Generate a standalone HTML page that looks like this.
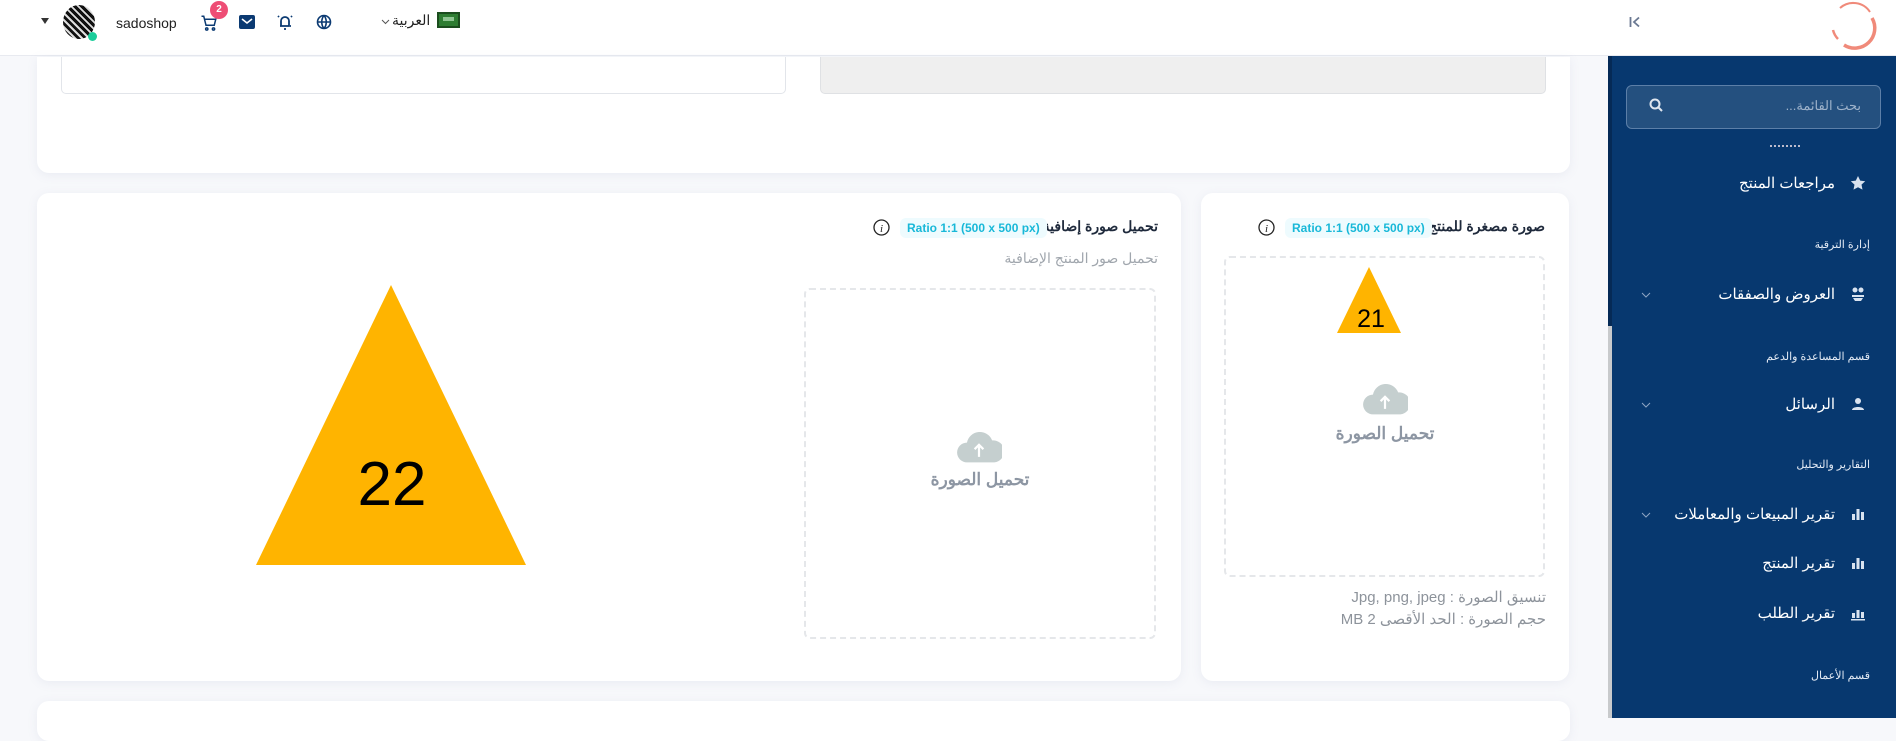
<!DOCTYPE html>
<html><head><meta charset="utf-8">
<style>
*{box-sizing:border-box;margin:0;padding:0}
body{width:1896px;height:718px;overflow:hidden;background:#f7f8fb;font-family:"Liberation Sans","Noto Sans CJK SC",sans-serif;position:relative;color:#334}
.a{position:absolute}
.card{position:absolute;background:#fff;border-radius:12px;box-shadow:0 2px 10px rgba(140,150,180,.12)}
.hdr{position:absolute;left:0;top:0;width:1896px;height:56px;background:#fff;border-bottom:1px solid #e8eaf0}
.side{position:absolute;left:1608px;top:56px;width:288px;height:662px;background:#07386f}
.it{position:absolute;right:61px;color:#fff;font-size:15px;direction:rtl;white-space:nowrap}
.sec{position:absolute;right:26px;color:#e4ebf5;font-size:11px;direction:rtl;white-space:nowrap}
.ico{position:absolute;left:1850px;width:16px;height:16px}
.chev{position:absolute;left:1641px;width:10px;height:6px}
.badge{position:absolute;background:#eefbfe;color:#18b8d8;font-size:12px;font-weight:bold;padding:3px 7px;border-radius:6px;white-space:nowrap}
.title{position:absolute;font-size:14px;font-weight:bold;color:#1f2a3c;direction:rtl;white-space:nowrap}
.dash{position:absolute;border:2px dashed #e5e7ea;border-radius:6px}
.up{position:absolute;font-size:17px;font-weight:bold;color:#8d96a3;white-space:nowrap;direction:rtl}
</style></head><body>

<div class="hdr"></div>
<div class="a" style="left:41px;top:18px;width:0;height:0;border-left:4px solid transparent;border-right:4px solid transparent;border-top:6px solid #333"></div>
<div class="a" style="left:63px;top:5px;width:32px;height:34px;border-radius:50%;background:repeating-linear-gradient(45deg,#111 0 3px,#ddd 3px 5px),#555;overflow:hidden"></div>
<div class="a" style="left:88px;top:32px;width:9px;height:9px;border-radius:50%;background:#1ccd9b"></div>
<div class="a" style="left:116px;top:15px;font-size:14px;color:#222">sadoshop</div>
<svg class="a" style="left:200px;top:14px" width="18" height="18" viewBox="0 0 24 24" fill="none" stroke="#0b3a72" stroke-width="2"><path d="M2 3h3l3 12h11l2-8H6"/><circle cx="9" cy="20" r="1.5"/><circle cx="18" cy="20" r="1.5"/></svg>
<div class="a" style="left:210px;top:1px;width:18px;height:18px;border-radius:50%;background:#ee4d75;color:#fff;font-size:10px;font-weight:bold;text-align:center;line-height:18px">2</div>
<svg class="a" style="left:239px;top:15px" width="16" height="14" viewBox="0 0 16 14"><rect width="16" height="14" rx="2" fill="#0b3a72"/><path d="M3 4l5 4 5-4" stroke="#fff" stroke-width="1.6" fill="none"/></svg>
<svg class="a" style="left:277px;top:13px" width="16" height="18" viewBox="0 0 16 18" fill="none" stroke="#0b3a72" stroke-width="1.8"><path d="M4 13V8a4 4 0 018 0v5H3M13 13h1M7 16h2M1 3l1 1M15 3l-1 1"/></svg>
<svg class="a" style="left:316px;top:14px" width="16" height="16" viewBox="0 0 16 16" fill="none" stroke="#0b3a72" stroke-width="1.6"><circle cx="8" cy="8" r="6.5"/><path d="M1.5 8h13M8 1.5c-3 3.5-3 9.5 0 13M8 1.5c3 3.5 3 9.5 0 13"/></svg>
<svg class="a" style="left:381px;top:19px" width="9" height="6" viewBox="0 0 9 6"><path d="M1 1l3.5 3.5L8 1" stroke="#555" fill="none"/></svg>
<div class="a" style="left:392px;top:12px;font-size:14px;color:#222;direction:rtl">العربية</div>
<div class="a" style="left:437px;top:12px;width:23px;height:16px;background:#2e7d32;border:2px solid #1b4d1e"><div style="margin:3px 4px;height:4px;background:#8fc592"></div></div>
<svg class="a" style="left:1629px;top:16px" width="12" height="12" viewBox="0 0 12 12" fill="none" stroke="#6a7892" stroke-width="1.8"><path d="M1.5 1v10M10 1.5L5 6l5 4.5"/></svg>
<svg class="a" style="left:1826px;top:0px" width="52" height="52" viewBox="0 0 52 52"><path d="M14 8a20 20 0 0130 4" stroke="#f08a7a" stroke-width="2" fill="none"/><path d="M46 18a20 20 0 01-28 27" stroke="#f08a7a" stroke-width="3.5" fill="none"/><path d="M7 30a20 20 0 005 9" stroke="#f08a7a" stroke-width="2.5" fill="none"/></svg>

<div class="side"></div>
<div class="a" style="left:1608px;top:56px;width:4px;height:270px;background:#052a56"></div>
<div class="a" style="left:1608px;top:326px;width:4px;height:392px;background:#c8cacc"></div>
<div class="a" style="left:1626px;top:85px;width:255px;height:44px;border:1px solid #5c7fa8;border-radius:6px;background:#24507f"></div>
<div class="a" style="right:35px;top:98px;color:#9fb3cb;font-size:13px;direction:rtl">بحث القائمة...</div>
<svg class="a" style="left:1649px;top:98px" width="14" height="14" viewBox="0 0 14 14" fill="none" stroke="#dfe6ef" stroke-width="2"><circle cx="6" cy="6" r="4.5"/><path d="M9.5 9.5L13 13"/></svg>
<div class="a" style="left:1770px;top:145px;width:30px;height:2px;border-top:2px dotted #bbc"></div>

<svg class="ico" style="top:175px" viewBox="0 0 16 16"><path d="M8 1l2.2 4.6 5 .6-3.7 3.4 1 5L8 12.2 3.5 14.6l1-5L.8 6.2l5-.6z" fill="#d9e3f0"/></svg>
<div class="it" style="top:174px">مراجعات المنتج</div>
<div class="sec" style="top:238px">إدارة الترقية</div>
<svg class="ico" style="top:286px" viewBox="0 0 16 16" fill="#d9e3f0"><circle cx="5" cy="4" r="2.5"/><circle cx="11" cy="4" r="2.5"/><path d="M2 9h12v2H2zM3 12h10l-2 3H5z"/></svg>
<div class="it" style="top:285px">العروض والصفقات</div>
<svg class="chev" style="top:292px" viewBox="0 0 10 6"><path d="M1 1l4 4 4-4" stroke="#8ea6c4" fill="none"/></svg>
<div class="sec" style="top:350px">قسم المساعدة والدعم</div>
<svg class="ico" style="top:396px" viewBox="0 0 16 16" fill="#d9e3f0"><circle cx="8" cy="5" r="3"/><path d="M2 14c0-4 12-4 12 0z"/></svg>
<div class="it" style="top:395px">الرسائل</div>
<svg class="chev" style="top:402px" viewBox="0 0 10 6"><path d="M1 1l4 4 4-4" stroke="#8ea6c4" fill="none"/></svg>
<div class="sec" style="top:458px">التقارير والتحليل</div>
<svg class="ico" style="top:506px" viewBox="0 0 16 16" fill="#d9e3f0"><rect x="2" y="8" width="3" height="6"/><rect x="6.5" y="3" width="3" height="11"/><rect x="11" y="6" width="3" height="8"/></svg>
<div class="it" style="top:505px">تقرير المبيعات والمعاملات</div>
<svg class="chev" style="top:512px" viewBox="0 0 10 6"><path d="M1 1l4 4 4-4" stroke="#8ea6c4" fill="none"/></svg>
<svg class="ico" style="top:555px" viewBox="0 0 16 16" fill="#d9e3f0"><rect x="2" y="8" width="3" height="6"/><rect x="6.5" y="3" width="3" height="11"/><rect x="11" y="6" width="3" height="8"/></svg>
<div class="it" style="top:554px">تقرير المنتج</div>
<svg class="ico" style="top:605px" viewBox="0 0 16 16" fill="#d9e3f0"><rect x="2" y="8" width="3" height="5"/><rect x="6.5" y="5" width="3" height="8"/><rect x="11" y="7" width="3" height="6"/><rect x="1" y="14" width="14" height="1.5"/></svg>
<div class="it" style="top:604px">تقرير الطلب</div>
<div class="sec" style="top:669px">قسم الأعمال</div>

<div class="card" style="left:37px;top:57px;width:1533px;height:116px;border-radius:0 0 12px 12px"></div>
<div class="a" style="left:61px;top:57px;width:725px;height:37px;border:1px solid #e2e5ea;border-top:none;border-radius:0 0 5px 5px;background:#fff"></div>
<div class="a" style="left:820px;top:57px;width:726px;height:37px;border:1px solid #dfe1e4;border-top:none;border-radius:0 0 5px 5px;background:#efefef"></div>

<div class="card" style="left:37px;top:193px;width:1144px;height:488px"></div>
<div class="title" style="right:738px;top:218px">تحميل صورة إضافية</div>
<div class="badge" style="left:900px;top:218px">Ratio 1:1 (500 x 500 px)</div>
<svg class="a" style="left:873px;top:219px" width="17" height="17" viewBox="0 0 17 17"><circle cx="8.5" cy="8.5" r="7.5" stroke="#222" stroke-width="1.3" fill="none"/><text x="8.5" y="13" font-size="11" font-style="italic" font-family="Liberation Serif" text-anchor="middle" fill="#222">i</text></svg>
<div class="a" style="right:738px;top:250px;font-size:14px;color:#a0a6ad;direction:rtl">تحميل صور المنتج الإضافية</div>
<div class="dash" style="left:804px;top:288px;width:352px;height:351px"></div>
<svg class="a" style="left:956px;top:430px" width="46" height="34" viewBox="0 0 42 30"><path d="M10 29a9 9 0 010-18 12 12 0 0123-2 10 10 0 012 20z" fill="#c5cfcf"/><path d="M21 24v-10M17 17l4-4 4 4" stroke="#fff" stroke-width="2" fill="none"/></svg>
<div class="up" style="left:930px;top:470px;width:100px;text-align:center">تحميل الصورة</div>
<svg class="a" style="left:256px;top:285px" width="270" height="280" viewBox="0 0 270 280"><polygon points="135,0 270,280 0,280" fill="#ffb400"/><text x="136" y="220" font-size="62" font-family="Liberation Sans" text-anchor="middle" fill="#000">22</text></svg>

<div class="card" style="left:1201px;top:193px;width:368px;height:488px"></div>
<div class="title" style="right:351px;top:218px">صورة مصغرة للمنتج</div>
<div class="badge" style="left:1285px;top:218px">Ratio 1:1 (500 x 500 px)</div>
<svg class="a" style="left:1258px;top:219px" width="17" height="17" viewBox="0 0 17 17"><circle cx="8.5" cy="8.5" r="7.5" stroke="#222" stroke-width="1.3" fill="none"/><text x="8.5" y="13" font-size="11" font-style="italic" font-family="Liberation Serif" text-anchor="middle" fill="#222">i</text></svg>
<div class="dash" style="left:1224px;top:256px;width:321px;height:321px"></div>
<svg class="a" style="left:1337px;top:267px" width="64" height="66" viewBox="0 0 64 66"><polygon points="32,0 64,66 0,66" fill="#ffb400"/><text x="34" y="60" font-size="25" font-family="Liberation Sans" text-anchor="middle" fill="#000">21</text></svg>
<svg class="a" style="left:1362px;top:382px" width="46" height="34" viewBox="0 0 42 30"><path d="M10 29a9 9 0 010-18 12 12 0 0123-2 10 10 0 012 20z" fill="#c5cfcf"/><path d="M21 24v-10M17 17l4-4 4 4" stroke="#fff" stroke-width="2" fill="none"/></svg>
<div class="up" style="left:1335px;top:424px;width:100px;text-align:center">تحميل الصورة</div>
<div class="a" style="right:350px;top:588px;font-size:15px;color:#8d939b;direction:rtl;white-space:nowrap">تنسيق الصورة : Jpg, png, jpeg</div>
<div class="a" style="right:350px;top:610px;font-size:15px;color:#8d939b;direction:rtl;white-space:nowrap">حجم الصورة : الحد الأقصى 2 MB</div>

<div class="card" style="left:37px;top:701px;width:1533px;height:40px"></div>
</body></html>
